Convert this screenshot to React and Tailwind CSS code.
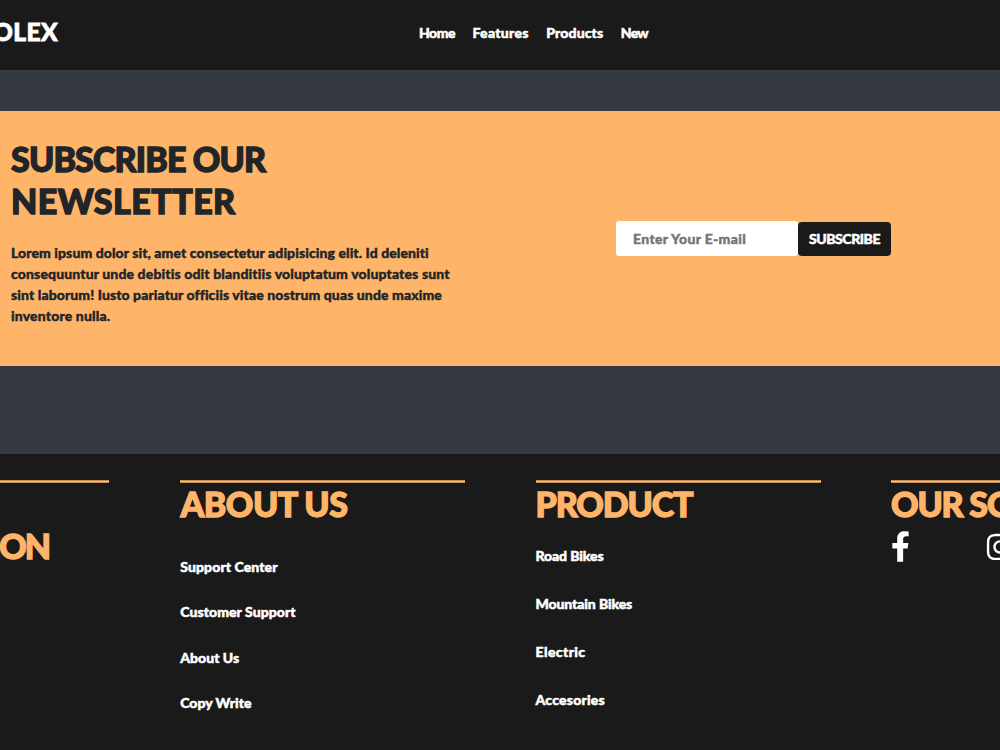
import { FaFacebookF, FaInstagram } from "react-icons/fa";

const navLinks = [
  { label: "Home", className: "tracking-[-0.5px]" },
  { label: "Features", className: "tracking-[0.3px]" },
  { label: "Products", className: "tracking-[0.12px]" },
  { label: "New", className: "tracking-[-0.8px]" },
];

const aboutLinks = [
  { label: "Support Center", className: "tracking-[0.1px]" },
  { label: "Customer Support", className: "tracking-[0.06px]" },
  { label: "About Us", className: "tracking-normal" },
  { label: "Copy Write", className: "tracking-normal" },
];

const productLinks = [
  { label: "Road Bikes", className: "tracking-[-0.1px]" },
  { label: "Mountain Bikes", className: "tracking-[-0.1px]" },
  { label: "Electric", className: "tracking-[0.4px]" },
  { label: "Accesories", className: "tracking-[0.2px]" },
];

function FooterColumn({ children }) {
  return (
    <div className="w-[285px] shrink-0">
      <div className="h-[3px] border-y border-[#c58d55] bg-[#ffc083]" />
      {children}
    </div>
  );
}

function FooterTitle({ className, children }) {
  return (
    <h2
      className={`text-[34px] leading-[42px] text-[#ffb569] whitespace-nowrap [-webkit-text-stroke:1.3px_#ffb569] ${className}`}
    >
      {children}
    </h2>
  );
}

export default function App() {
  return (
    <div className="h-[750px] w-full overflow-hidden bg-[#343a40] font-[Lato,sans-serif] text-sm font-black leading-[21px]">
      {/* Navbar */}
      <header className="flex h-[70px] items-center bg-[#1a1a1a] pb-[5px] text-white">
        <a
          href="#"
          className="flex w-[58px] justify-end pb-[1px] text-[24.5px] leading-8 tracking-[0.4px] [-webkit-text-stroke:0.8px_white]"
        >
          ROLEX
        </a>
        <nav className="ml-[361px] flex gap-[17.5px] [-webkit-text-stroke:0.5px_white]">
          {navLinks.map((link) => (
            <a key={link.label} href="#" className={link.className}>
              {link.label}
            </a>
          ))}
        </nav>
      </header>

      {/* Newsletter */}
      <section className="mt-[41px] flex h-[255px] bg-[#ffb569] text-[#212529]">
        <div className="w-[616px] pl-[11px] pt-[27px]">
          <h1 className="text-[34px] leading-[42px] [-webkit-text-stroke:1.3px_#212529]">
            <span className="block tracking-[-0.85px]">SUBSCRIBE OUR</span>
            <span className="block tracking-[0.45px]">NEWSLETTER</span>
          </h1>
          <p className="mt-[20px] w-[446px] whitespace-nowrap [-webkit-text-stroke:0.4px_#212529]">
            <span className="block tracking-[0.08px]">
              Lorem ipsum dolor sit, amet consectetur adipisicing elit. Id
              deleniti
            </span>
            <span className="block tracking-[0.13px]">
              consequuntur unde debitis odit blanditiis voluptatum voluptates
              sunt
            </span>
            <span className="block tracking-[0.09px]">
              sint laborum! Iusto pariatur officiis vitae nostrum quas unde
              maxime
            </span>
            <span className="block tracking-[0.16px]">inventore nulla.</span>
          </p>
        </div>
        <form className="flex items-center">
          <input
            type="email"
            placeholder="Enter Your E-mail"
            className="h-[35px] w-[182px] rounded-[3px] bg-white px-[17px] tracking-[0.32px] placeholder:text-[#757575] placeholder:[-webkit-text-stroke:0.4px_#757575]"
          />
          <button
            type="button"
            className="h-[34px] w-[93px] rounded-[4px] bg-[#1a1a1a] text-center tracking-[-0.45px] text-white [-webkit-text-stroke:0.5px_white]"
          >
            SUBSCRIBE
          </button>
        </form>
      </section>

      {/* Footer */}
      <footer className="mt-[88px] flex h-[296px] justify-center gap-[70.6px] bg-[#1a1a1a] pl-[0.4px] pt-[26px] text-white [-webkit-text-stroke:0.5px_white]">
        <FooterColumn>
          <FooterTitle className="pl-[4px] tracking-[-2.1px]">
            CONTACT
            <br />
            INFORMATION
          </FooterTitle>
        </FooterColumn>

        <FooterColumn>
          <FooterTitle className="pl-[0.5px] tracking-[-0.5px]">
            ABOUT US
          </FooterTitle>
          <ul className="mt-[18.6px] pl-[0.4px]">
            {aboutLinks.map((link) => (
              <li key={link.label} className="flex h-[45.4px] items-center">
                <a href="#" className={link.className}>
                  {link.label}
                </a>
              </li>
            ))}
          </ul>
        </FooterColumn>

        <FooterColumn>
          <FooterTitle className="tracking-[-1.1px]">PRODUCT</FooterTitle>
          <ul className="mt-[6px]">
            {productLinks.map((link) => (
              <li key={link.label} className="flex h-[48.2px] items-center">
                <a href="#" className={link.className}>
                  {link.label}
                </a>
              </li>
            ))}
          </ul>
        </FooterColumn>

        <FooterColumn>
          <FooterTitle className="tracking-[-1.2px]">OUR SOCIAL</FooterTitle>
          <div className="mt-[6px] flex items-center gap-[75px]">
            <FaFacebookF className="h-[31px] w-[19px]" />
            <FaInstagram className="h-[30px] w-[30px]" />
          </div>
        </FooterColumn>
      </footer>
    </div>
  );
}
